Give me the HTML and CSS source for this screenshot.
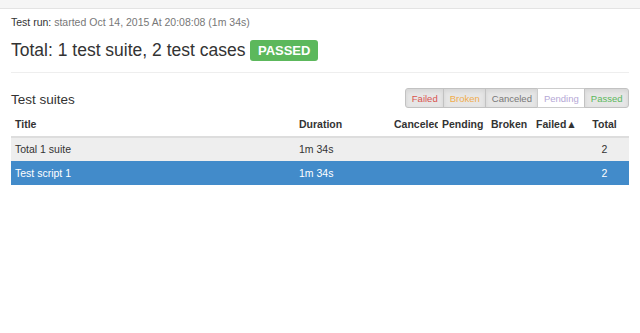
FILE: index.html
```html
<!DOCTYPE html>
<html lang="en">
<head>
  <meta charset="UTF-8" />
  <title>Test run report</title>
  <link rel="stylesheet" href="styles.css">
</head>
<body>

<div class="topbar"></div>

<div class="container">
  <div class="run-info"><span class="run-label">Test run:</span> started Oct 14, 2015 At 20:08:08 (1m 34s)</div>

  <div class="summary">
    <h1>Total: 1 test suite, 2 test cases</h1>
    <span class="label-passed">PASSED</span>
  </div>

  <hr>

  <div class="suites-head">
    <h2>Test suites</h2>
    <div class="btn-group">
      <button class="btn active failed">Failed</button>
      <button class="btn active broken">Broken</button>
      <button class="btn active canceled">Canceled</button>
      <button class="btn pending">Pending</button>
      <button class="btn active passed">Passed</button>
    </div>
  </div>

  <table class="suites">
    <colgroup>
      <col class="c-title">
      <col class="c-duration">
      <col class="c-canceled">
      <col class="c-pending">
      <col class="c-broken">
      <col class="c-failed">
      <col class="c-total">
    </colgroup>
    <thead>
      <tr>
        <th>Title</th>
        <th>Duration</th>
        <th>Canceled</th>
        <th>Pending</th>
        <th>Broken</th>
        <th>Failed▲</th>
        <th class="num">Total</th>
      </tr>
    </thead>
    <tbody>
      <tr class="total-row">
        <td>Total 1 suite</td>
        <td>1m 34s</td>
        <td></td>
        <td></td>
        <td></td>
        <td></td>
        <td class="num">2</td>
      </tr>
      <tr class="selected">
        <td>Test script 1</td>
        <td>1m 34s</td>
        <td></td>
        <td></td>
        <td></td>
        <td></td>
        <td class="num">2</td>
      </tr>
    </tbody>
  </table>
</div>

</body>
</html>
```

FILE: styles.css
```css
body {
  margin: 0;
  font-family: 'Liberation Sans', Arial, sans-serif;
  font-size: 10.5px;
  color: #333;
  background: #fff;
}

.topbar {
  height: 8px;
  background: #f5f5f5;
  border-bottom: 1px solid #e3e3e3;
}

.container {
  padding: 0 11px;
}

.run-info {
  margin-top: 6px;
  line-height: 14px;
  color: #777;
}

.run-label {
  color: #333;
}

.summary {
  display: flex;
  align-items: center;
  gap: 5px;
  margin-top: 11px;
  height: 21px;
}

.summary h1 {
  margin: 0;
  font-size: 17.5px;
  font-weight: normal;
  line-height: 19px;
}

.label-passed {
  background: #5cb85c;
  color: #fff;
  font-weight: bold;
  font-size: 13px;
  line-height: 15px;
  padding: 3px 7.5px;
  border-radius: 3px;
}

hr {
  margin: 11px 0 0;
  border: 0;
  border-top: 1px solid #eee;
}

.suites-head {
  display: flex;
  justify-content: space-between;
  align-items: center;
  margin-top: 15px;
  height: 20px;
}

.suites-head h2 {
  margin: 0;
  font-size: 13.5px;
  font-weight: normal;
  padding-top: 2px;
}

.btn-group {
  display: flex;
}

.btn {
  font-family: inherit;
  font-size: 9.5px;
  height: 20px;
  padding: 0 5.5px;
  margin: 0;
  background: #fff;
  border: 1px solid #ccc;
  margin-left: -1px;
}

.btn:first-child {
  border-radius: 3px 0 0 3px;
  margin-left: 0;
}

.btn:last-child {
  border-radius: 0 3px 3px 0;
}

.btn.active {
  background: #e6e6e6;
  border-color: #c2c2c2;
  box-shadow: inset 0 2px 4px rgba(0,0,0,0.08);
}

.failed { color: #d9534f; }
.broken { color: #f0ad4e; }
.canceled { color: #777; }
.pending { color: #b5a8d6; }
.passed { color: #5cb85c; }

.suites {
  width: 100%;
  margin-top: 5px;
  border-collapse: collapse;
  table-layout: fixed;
}

.c-title { width: 284px; }
.c-duration { width: 95px; }
.c-canceled { width: 48px; }
.c-pending { width: 49px; }
.c-broken { width: 45px; }
.c-failed { width: 48px; }
.c-total { width: 49px; }

.suites th {
  text-align: left;
  font-weight: bold;
  padding: 5px 4px;
  line-height: 13px;
  white-space: nowrap;
  overflow: hidden;
  border-bottom: 2px solid #ddd;
}

.suites td {
  padding: 5px 4px;
  line-height: 13px;
  border-top: 1px solid #ddd;
}

.suites .num {
  text-align: center;
}

.total-row td {
  background: #eee;
}

.selected td {
  background: #428bca;
  border-top-color: #428bca;
  color: #fff;
}
```
